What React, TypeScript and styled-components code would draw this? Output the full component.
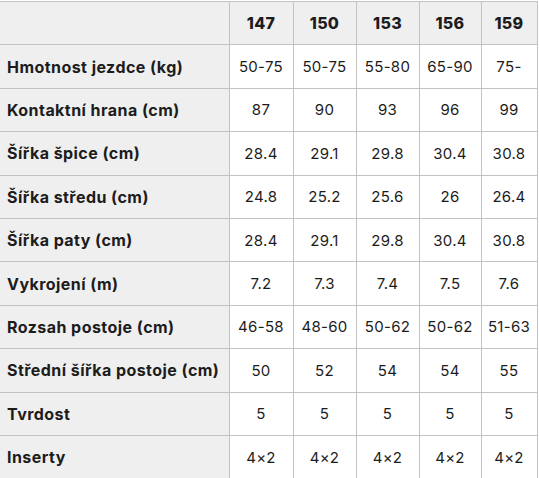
import React from "react";
import styled, { createGlobalStyle } from "styled-components";

const Global = createGlobalStyle`
  html, body { margin: 0; padding: 0; background: #ffffff; }
  body { font-family: Inter, "Noto Sans", sans-serif; color: #1c1c1c; }
`;

const Wrap = styled.div`
  padding-top: 1px;
  width: 537px;
`;

const Table = styled.table`
  border-collapse: collapse;
  table-layout: fixed;
  width: 537px;
`;

const Row = styled.tr`
  height: 43.4px;
`;

const Label = styled.th`
  background: #efefef;
  border: 1px solid #c2c2c2;
  border-left: none;
  text-align: left;
  padding: 0 0 0 7px;
  font-weight: 700;
  font-size: 16px;
  letter-spacing: 0.45px;
  color: #1c1c1c;
  white-space: nowrap;
  overflow: hidden;
`;

const Head = styled.th`
  background: #efefef;
  border: 1px solid #c2c2c2;
  text-align: center;
  padding: 0;
  font-weight: 800;
  font-size: 16px;
  letter-spacing: 0.3px;
  color: #1c1c1c;
`;

const Cell = styled.td`
  background: #ffffff;
  border: 1px solid #c2c2c2;
  text-align: center;
  padding: 0;
  font-weight: 400;
  font-size: 15px;
  letter-spacing: 0.3px;
  color: #1c1c1c;
  white-space: nowrap;
  overflow: hidden;
`;

const sizes = ["147", "150", "153", "156", "159"];
const colWidths = [229, 64, 63, 63, 62, 56];

const rows: [string, string[]][] = [
  ["Hmotnost jezdce (kg)", ["50-75", "50-75", "55-80", "65-90", "75-"]],
  ["Kontaktní hrana (cm)", ["87", "90", "93", "96", "99"]],
  ["Šířka špice (cm)", ["28.4", "29.1", "29.8", "30.4", "30.8"]],
  ["Šířka středu (cm)", ["24.8", "25.2", "25.6", "26", "26.4"]],
  ["Šířka paty (cm)", ["28.4", "29.1", "29.8", "30.4", "30.8"]],
  ["Vykrojení (m)", ["7.2", "7.3", "7.4", "7.5", "7.6"]],
  ["Rozsah postoje (cm)", ["46-58", "48-60", "50-62", "50-62", "51-63"]],
  ["Střední šířka postoje (cm)", ["50", "52", "54", "54", "55"]],
  ["Tvrdost", ["5", "5", "5", "5", "5"]],
  ["Inserty", ["4×2", "4×2", "4×2", "4×2", "4×2"]],
];

export default function App() {
  return (
    <Wrap>
      <Global />
      <Table>
        <colgroup>
          {colWidths.map((w, i) => (
            <col key={i} style={{ width: w }} />
          ))}
        </colgroup>
        <thead>
          <Row>
            <Label />
            {sizes.map((s) => (
              <Head key={s}>{s}</Head>
            ))}
          </Row>
        </thead>
        <tbody>
          {rows.map(([label, vals]) => (
            <Row key={label}>
              <Label>{label}</Label>
              {vals.map((v, i) => (
                <Cell key={i}>{v}</Cell>
              ))}
            </Row>
          ))}
        </tbody>
      </Table>
    </Wrap>
  );
}
